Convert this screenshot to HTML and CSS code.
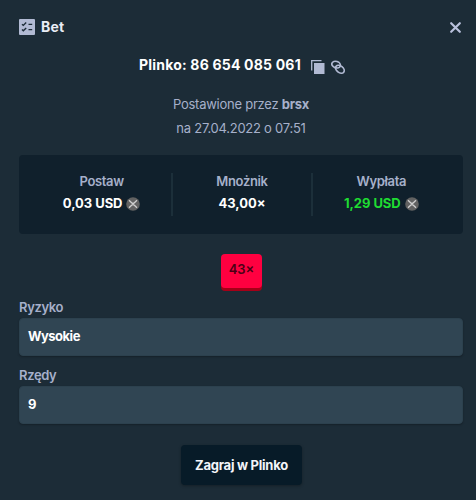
FILE: index.html
```html
<!DOCTYPE html>
<html lang="pl">
<head>
    <meta charset="UTF-8">
    <meta name="viewport" content="width=device-width, initial-scale=1.0">
    <title>Bet</title>
    <link rel="stylesheet" href="styles.css">
</head>
<body>
    <div class="modal">
        <div class="header">
            <svg class="icon-list" viewBox="0 0 16 16">
                <rect width="16" height="16" rx="1" fill="#b1bad3"/>
                <path d="M3 5.2l1.3 1.2L7.2 3.6M3 10.6l1.3 1.2L7.2 9M9.5 5.4h3.7M9.5 10.6h3.7" fill="none" stroke="#1c2c37" stroke-width="1.4"/>
            </svg>
            <h1>Bet</h1>
            <button class="close">
                <svg viewBox="0 0 12 12"><path d="M2 2l8 8M10 2l-8 8" stroke="#b9c1dc" stroke-width="2" stroke-linecap="round"/></svg>
            </button>
        </div>

        <div class="bet-id">
            <span>Plinko: 86 654 085 061</span>
            <svg class="icon-copy" viewBox="0 0 14 14">
                <path d="M.7 10.5V.7h9.8" fill="none" stroke="#b1bad3" stroke-width="1.3"/>
                <rect x="3" y="3" width="10.5" height="11" fill="#b1bad3"/>
            </svg>
            <svg class="icon-link" viewBox="0 0 14 14">
                <g fill="none" stroke="#b1bad3" stroke-width="1.7">
                    <ellipse cx="5.1" cy="4.6" rx="4.4" ry="3.2" transform="rotate(18 5.1 4.6)"/>
                    <ellipse cx="8.9" cy="9.2" rx="4.8" ry="3.3" transform="rotate(38 8.9 9.2)"/>
                </g>
            </svg>
        </div>

        <div class="info">
            <div class="placed-by">Postawione przez <b>brsx</b></div>
            <div class="placed-at">na 27.04.2022 o 07:51</div>
        </div>

        <div class="stats">
            <div class="stat">
                <span class="label">Postaw</span>
                <span class="value"><span>0,03 USD</span>
                    <svg class="coin" viewBox="0 0 14 14"><circle cx="7" cy="7" r="6.8" fill="#626262"/><path d="M3 3.2l2.6 2.5q1.4 1.3 2.8 0L11 3.2M3 10.8l2.6-2.5q1.4-1.3 2.8 0l2.6 2.5" fill="none" stroke="#d0d0d0" stroke-width="1.3"/></svg>
                </span>
            </div>
            <div class="stat">
                <span class="label">Mnożnik</span>
                <span class="value">43,00×</span>
            </div>
            <div class="stat">
                <span class="label">Wypłata</span>
                <span class="value"><span class="win">1,29 USD</span>
                    <svg class="coin" viewBox="0 0 14 14"><circle cx="7" cy="7" r="6.8" fill="#626262"/><path d="M3 3.2l2.6 2.5q1.4 1.3 2.8 0L11 3.2M3 10.8l2.6-2.5q1.4-1.3 2.8 0l2.6 2.5" fill="none" stroke="#d0d0d0" stroke-width="1.3"/></svg>
                </span>
            </div>
        </div>

        <div class="result">43×</div>

        <div class="field">
            <span class="label">Ryzyko</span>
            <div class="input">Wysokie</div>
        </div>
        <div class="field">
            <span class="label">Rzędy</span>
            <div class="input">9</div>
        </div>

        <button class="play">Zagraj w Plinko</button>
    </div>
</body>
</html>
```
FILE: styles.css
```css
* {
    box-sizing: border-box;
}
body {
    margin: 0;
    background-color: #1c2c37;
    font-family: 'Inter', 'Liberation Sans', sans-serif;
    font-size: 13px;
    line-height: 20px;
    color: #fff;
}
svg {
    display: block;
    flex-shrink: 0;
}
button {
    border: none;
    font-family: inherit;
    cursor: pointer;
}
.modal {
    height: 500px;
    padding: 17px 13px 0 19px;
    display: flex;
    flex-direction: column;
    overflow: hidden;
}
.header {
    display: flex;
    align-items: center;
    height: 20px;
}
.icon-list {
    width: 16px;
    height: 16px;
}
h1 {
    margin: 0 auto 0 6px;
    font-size: 14px;
    font-weight: 700;
    letter-spacing: 0.2px;
    line-height: 20px;
    color: #e9edf5;
}
.close {
    padding: 0;
    margin-right: 1px;
    background: none;
}
.close svg {
    width: 13px;
    height: 13px;
}
.bet-id {
    display: flex;
    align-items: center;
    height: 20px;
    margin: 18px 0 0 120px;
    font-size: 14px;
    font-weight: 700;
    letter-spacing: 0.2px;
}
.bet-id span {
    width: 172px;
    white-space: nowrap;
}
.icon-copy {
    width: 14px;
    height: 14px;
    margin-top: 3px;
}
.icon-link {
    width: 14px;
    height: 14px;
    margin: 3px 0 0 6px;
}
.info {
    width: 444px;
    margin-top: 17px;
    line-height: 24px;
    letter-spacing: -0.25px;
    text-align: center;
    color: #a6b0ca;
}
.info b {
    font-weight: 700;
}
.stats {
    display: grid;
    grid-template-columns: repeat(3, 1fr);
    align-items: center;
    width: 444px;
    height: 79px;
    margin-top: 15px;
    padding: 0 13px;
    background-color: #10202c;
    border-radius: 4px;
}
.stat {
    display: flex;
    flex-direction: column;
    align-items: center;
    height: 43px;
    line-height: 18px;
}
.stat + .stat {
    border-left: 2px solid #1c2f3a;
}
.label {
    font-weight: 600;
    letter-spacing: -0.35px;
    color: #a6b0ca;
}
.stat .label {
    margin-top: -1px;
}
.value {
    display: flex;
    align-items: center;
    gap: 4px;
    margin-top: 4px;
    font-weight: 700;
    letter-spacing: -0.05px;
}
.win {
    color: #1fdc32;
}
.coin {
    width: 14px;
    height: 14px;
    margin-top: 2px;
}
.result {
    width: 41px;
    height: 34px;
    margin: 20px 0 0 202px;
    background-color: #ff0040;
    border-radius: 4px;
    box-shadow: 0 3px 0 #a50018;
    font-weight: 600;
    line-height: 30px;
    text-align: center;
    color: #4b0014;
}
.field {
    width: 444px;
    margin-top: 9px;
}
.field .label {
    display: block;
    margin-bottom: 1px;
}
.input {
    height: 38px;
    padding: 0 8px;
    background-color: #304553;
    border: 1px solid #2c414e;
    border-radius: 4px;
    box-shadow: 0 1px 2px rgba(0, 0, 0, 0.25);
    font-weight: 700;
    letter-spacing: -0.5px;
    line-height: 35px;
}
.play {
    width: 121px;
    height: 40px;
    margin: 21px 0 0 162px;
    padding: 0;
    background-color: #071b28;
    border-radius: 4px;
    box-shadow: 0 1px 3px rgba(0, 0, 0, 0.3);
    font-size: 13px;
    font-weight: 700;
    letter-spacing: -0.25px;
    color: #f3f5fa;
}
```
